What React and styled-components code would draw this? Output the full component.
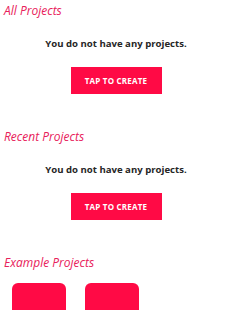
import React from "react";
import styled, { createGlobalStyle } from "styled-components";

const GlobalStyle = createGlobalStyle`
  html, body {
    margin: 0;
    padding: 0;
    background: #ffffff;
    overflow: hidden;
  }
  body {
    font-family: "Open Sans", "Liberation Sans", sans-serif;
  }
`;

const Page = styled.div`
  width: 232px;
  height: 310px;
  overflow: hidden;
  padding-top: 3px;
  box-sizing: border-box;
`;

const Section = styled.section`
  display: flex;
  flex-direction: column;
  margin-bottom: 35px;
`;

const Title = styled.h2`
  margin: 0;
  padding-left: 4px;
  font-size: 12px;
  line-height: 16px;
  font-style: italic;
  font-weight: 400;
  color: #e8205a;
`;

const Message = styled.p`
  margin: 18px 0 0;
  text-align: center;
  font-size: 9.6px;
  line-height: 14px;
  font-weight: 700;
  color: #262626;
`;

const CreateButton = styled.button`
  align-self: center;
  margin-top: 16px;
  width: 91px;
  height: 27px;
  border: none;
  background: #ff0a45;
  color: #ffffff;
  font-family: inherit;
  font-size: 8px;
  font-weight: 700;
  letter-spacing: 0.2px;
  cursor: pointer;
`;

const CardRow = styled.div`
  display: flex;
  gap: 19px;
  padding-left: 12px;
  margin-top: 12px;
`;

const Card = styled.div`
  width: 54px;
  height: 60px;
  border-radius: 6px;
  background: #ff0a45;
`;

const EmptySection = ({ title }) => (
  <Section>
    <Title>{title}</Title>
    <Message>You do not have any projects.</Message>
    <CreateButton>TAP TO CREATE</CreateButton>
  </Section>
);

export default function App() {
  return (
    <>
      <GlobalStyle />
      <Page>
        <EmptySection title="All Projects" />
        <EmptySection title="Recent Projects" />
        <Section>
          <Title>Example Projects</Title>
          <CardRow>
            <Card />
            <Card />
          </CardRow>
        </Section>
      </Page>
    </>
  );
}
